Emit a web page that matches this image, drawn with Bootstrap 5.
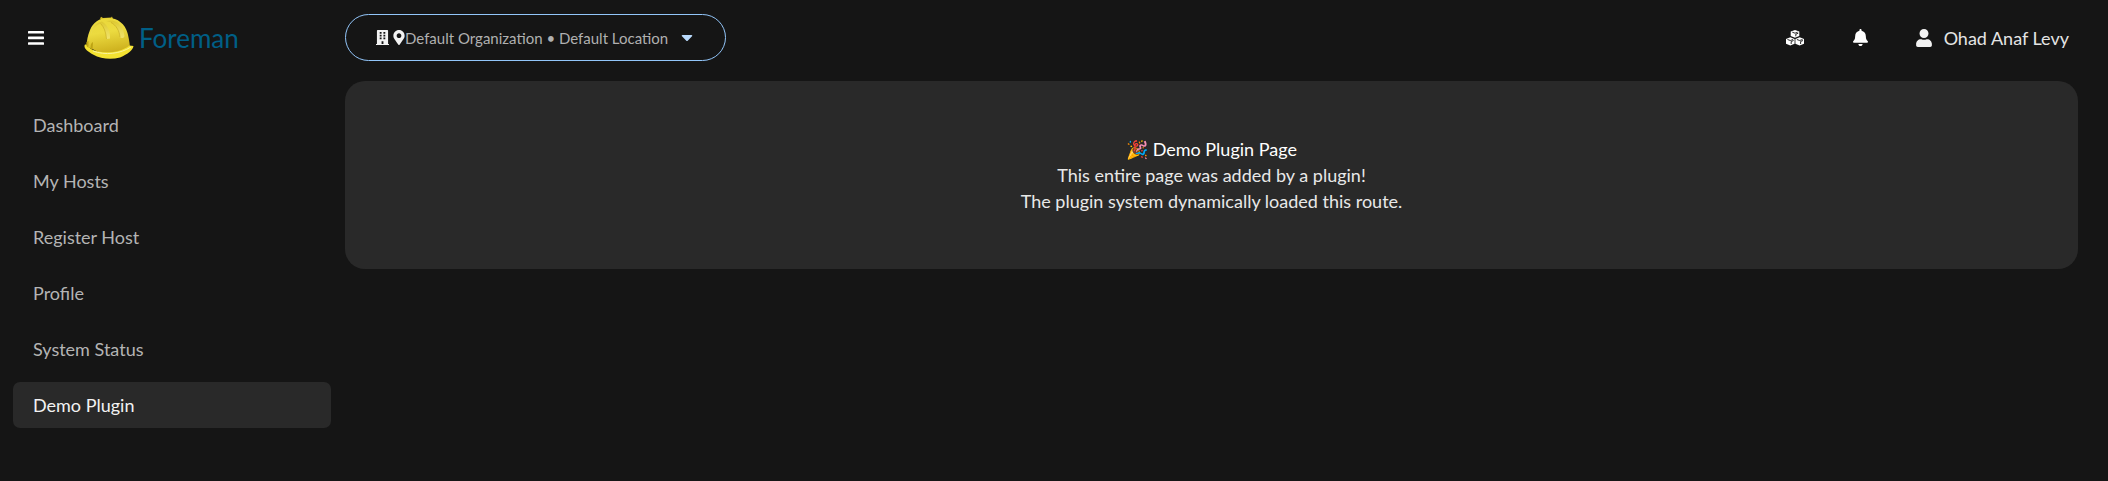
<!DOCTYPE html>
<html lang="en" data-bs-theme="dark">
<head>
<meta charset="utf-8">
<meta name="viewport" content="width=device-width, initial-scale=1">
<title>Foreman</title>
<link href="https://cdn.jsdelivr.net/npm/bootstrap@5.3.0/dist/css/bootstrap.min.css" rel="stylesheet">
<style>
body{background:#151515;color:#f2f2f2;font-family:Lato,"Liberation Sans",sans-serif;font-size:18px;line-height:26px;font-weight:400}
.masthead{height:75px;padding:0 30px 0 12px}
.brand-area{width:333px;flex:none}
.icon-btn{width:32px;height:32px;padding:0;border:0;background:none;color:#fff;display:flex;align-items:center;justify-content:center}
.brand-link{margin-left:32px;color:#005f86;font-size:26px;text-decoration:none;gap:5px}
.context-btn{height:47px;padding:0 32px 0 30px;border:1px solid #92c5f9;border-radius:24px;background:none;color:#b0b0b0;font-size:15px}
.context-btn .caret{color:#b9dafc;margin-left:13px}
.tools{gap:34px}
.user-btn{border:0;background:none;color:#e4e4e4;padding:0 9px 0 5px;gap:12px}
.side-nav{width:345px;flex:none;padding:27px 14px 0 13px;gap:10px}
.side-nav .nav-link{color:#b4b4b4;padding:10px 20px;border-radius:7px}
.side-nav .nav-link.active{background:#292929;color:#f2f2f2}
.page-panel{background:#292929;color:#e8e8e8;border-radius:20px;margin:6px 30px 0 0;padding:55px 16px}
.page-panel h1,.page-panel p{font-size:18px;line-height:26px;font-weight:400;margin:0}
</style>
</head>
<body>
<header class="masthead d-flex align-items-center">
  <div class="brand-area d-flex align-items-center">
    <button class="icon-btn ms-2" type="button" aria-label="Global navigation">
      <svg width="16" height="14" viewBox="0 0 16 14" fill="currentColor"><rect width="16" height="2.600" rx=".6"/><rect y="5.600" width="16" height="2.600" rx=".6"/><rect y="11.200" width="16" height="2.600" rx=".6"/></svg>
    </button>
    <a class="brand-link d-flex align-items-center" href="#">
      <svg width="50" height="44" viewBox="0 0 50 44" aria-hidden="true">
        <defs>
          <linearGradient id="dome" x1="0" y1="0" x2=".2" y2="1"><stop offset="0" stop-color="#e9d73a"/><stop offset=".45" stop-color="#ecdb40"/><stop offset="1" stop-color="#cdb01d"/></linearGradient>
          <linearGradient id="ridge" x1="0" y1="0" x2="0" y2="1"><stop offset="0" stop-color="#d8c22b"/><stop offset="1" stop-color="#f5ea80"/></linearGradient>
        </defs>
        <path d="M16 3 17 .8 19 2 27 1.500 28 .5 29 3z" fill="#d3bb22"/>
        <path d="M2.500 30C3 24 3.500 20 6 14 9 6.500 15 2 24 2 34 2 41 8 43.500 17 45 23 45.500 26 46 31L40 37 20 39z" fill="url(#dome)"/>
        <path d="M7 18C9 12 12 9 16.500 7.500 20 11 22 16 22.500 23L26 22.500C26.500 15 23 8 18 5.500 11 7.500 8 11 7 18z" fill="url(#ridge)" opacity=".75"/>
        <path d="M22 5C27 4 30 4.500 33 6 38 10 40 15 40.500 20 40 22.500 37 22.500 36 21 35.500 15 32 9 27 6.500z" fill="url(#ridge)" opacity=".75"/>
        <path d="M16.500 7.500C20 11 22 16 22.500 23M27 6.500C32 9 35.500 15 36 21" fill="none" stroke="#b99b15" stroke-width=".8" opacity=".6"/>
        <path d="M1 28.500C4 28 5 32 9 34 20 38 36 37 45.500 29.500L49.500 30C49 34 44 38 36 41.500 27 44 17 43 9 38.500 4 35.500 0 33 .5 29.500z" fill="#f4e231"/>
        <path d="M9 35C21 39.500 36 38 47 31" fill="none" stroke="#fbf39a" stroke-width="1"/>
        <path d="M2.500 30V26L4.500 25V32zM7 33C6 30 7 27 9 26L8.500 33.500z" fill="#bda313"/>
      </svg>
      <span>Foreman</span>
    </a>
  </div>
  <button class="context-btn d-flex align-items-center" type="button" aria-haspopup="true">
    <svg class="me-1" width="13" height="15" viewBox="0 0 448 512" fill="#f2f2f2"><path fill-rule="evenodd" d="M436 480h-20V24c0-13-11-24-24-24H56C43 0 32 11 32 24v456H12c-7 0-12 5-12 12v20h448v-20c0-7-5-12-12-12zM128 64h64v64h-64zM256 64h64v64h-64zM128 160h64v64h-64zM256 160h64v64h-64zM128 256h64v64h-64zM256 256h64v64h-64zM192 384h64v96h-64z"/></svg>
    <svg width="12" height="15" viewBox="0 0 384 512" fill="#f2f2f2"><path d="M172.268 501.670C26.970 291.031 0 269.413 0 192 0 85.961 85.961 0 192 0s192 85.961 192 192c0 77.413-26.970 99.031-172.268 309.670-9.535 13.774-29.930 13.773-39.464 0zM192 272c44.183 0 80-35.817 80-80s-35.817-80-80-80-80 35.817-80 80 35.817 80 80 80z"/></svg>
    <span>Default Organization • Default Location</span>
    <svg class="caret" width="12" height="8" viewBox="0 0 12 8" fill="currentColor"><path d="M1.500 1h9c.8 0 1 .8.5 1.300L6.700 6.700c-.4.400-1 .4-1.400 0L1 2.300C.5 1.800.7 1 1.500 1z"/></svg>
  </button>
  <div class="tools ms-auto d-flex align-items-center">
    <button class="icon-btn" type="button" aria-label="Resources">
      <svg width="18" height="16" viewBox="0 0 18 16"><g fill="#fff"><path d="M9 0 13.300 1.600V6L9 7.800 4.700 6V1.600z"/><path d="M4.300 7.200 8.600 8.900V13.700L4.300 15.600 0 13.700V8.900z"/><path d="M13.700 7.200 18 8.900V13.700L13.700 15.600 9.400 13.700V8.900z"/></g><g fill="none" stroke="#151515" stroke-width=".9"><path d="M6.300 2.200 9 3.200 11.700 2.200M9.800 6.300V4.200L12.300 3.200M1.500 9.500 4.300 10.500 7.100 9.500M5.200 14V11.500L7.600 10.500M10.900 9.500 13.700 10.500 16.500 9.500M14.600 14V11.500L17 10.500"/></g></svg>
    </button>
    <button class="icon-btn" type="button" aria-label="Notifications">
      <svg width="15" height="17" viewBox="0 0 448 512" fill="currentColor"><path d="M224 512c35.320 0 63.970-28.650 63.970-64H160.030c0 35.350 28.650 64 63.970 64zm215.390-149.710c-19.320-20.760-55.470-51.990-55.470-154.290 0-77.700-54.480-139.900-127.940-155.160V32c0-17.670-14.320-32-31.980-32s-31.980 14.330-31.980 32v20.840C118.560 68.100 64.080 130.300 64.080 208c0 102.300-36.150 133.530-55.470 154.290-6 6.450-8.660 14.160-8.610 21.710.11 16.400 12.980 32 32.100 32h383.800c19.120 0 32-15.600 32.100-32 .05-7.550-2.610-15.270-8.610-21.710z"/></svg>
    </button>
    <button class="user-btn d-flex align-items-center" type="button" aria-haspopup="true">
      <svg width="16" height="18" viewBox="0 0 448 512" fill="#f2f2f2"><path d="M224 256c70.700 0 128-57.300 128-128S294.700 0 224 0 96 57.300 96 128s57.300 128 128 128zm89.600 32h-16.700c-22.200 10.200-46.900 16-72.900 16s-50.600-5.800-72.900-16h-16.700C60.200 288 0 348.200 0 422.400V464c0 26.500 21.500 48 48 48h352c26.500 0 48-21.500 48-48v-41.600c0-74.200-60.200-134.400-134.400-134.400z"/></svg>
      <span>Ohad Anaf Levy</span>
    </button>
  </div>
</header>
<div class="d-flex align-items-start">
  <nav class="side-nav nav flex-column" aria-label="Global">
    <a class="nav-link" href="#">Dashboard</a>
    <a class="nav-link" href="#">My Hosts</a>
    <a class="nav-link" href="#">Register Host</a>
    <a class="nav-link" href="#">Profile</a>
    <a class="nav-link" href="#">System Status</a>
    <a class="nav-link active" aria-current="page" href="#">Demo Plugin</a>
  </nav>
  <main class="page-panel flex-grow-1 text-center">
    <h1>🎉 Demo Plugin Page</h1>
    <p>This entire page was added by a plugin!</p>
    <p>The plugin system dynamically loaded this route.</p>
  </main>
</div>
<script src="https://cdn.jsdelivr.net/npm/bootstrap@5.3.0/dist/js/bootstrap.bundle.min.js"></script>
</body>
</html>
